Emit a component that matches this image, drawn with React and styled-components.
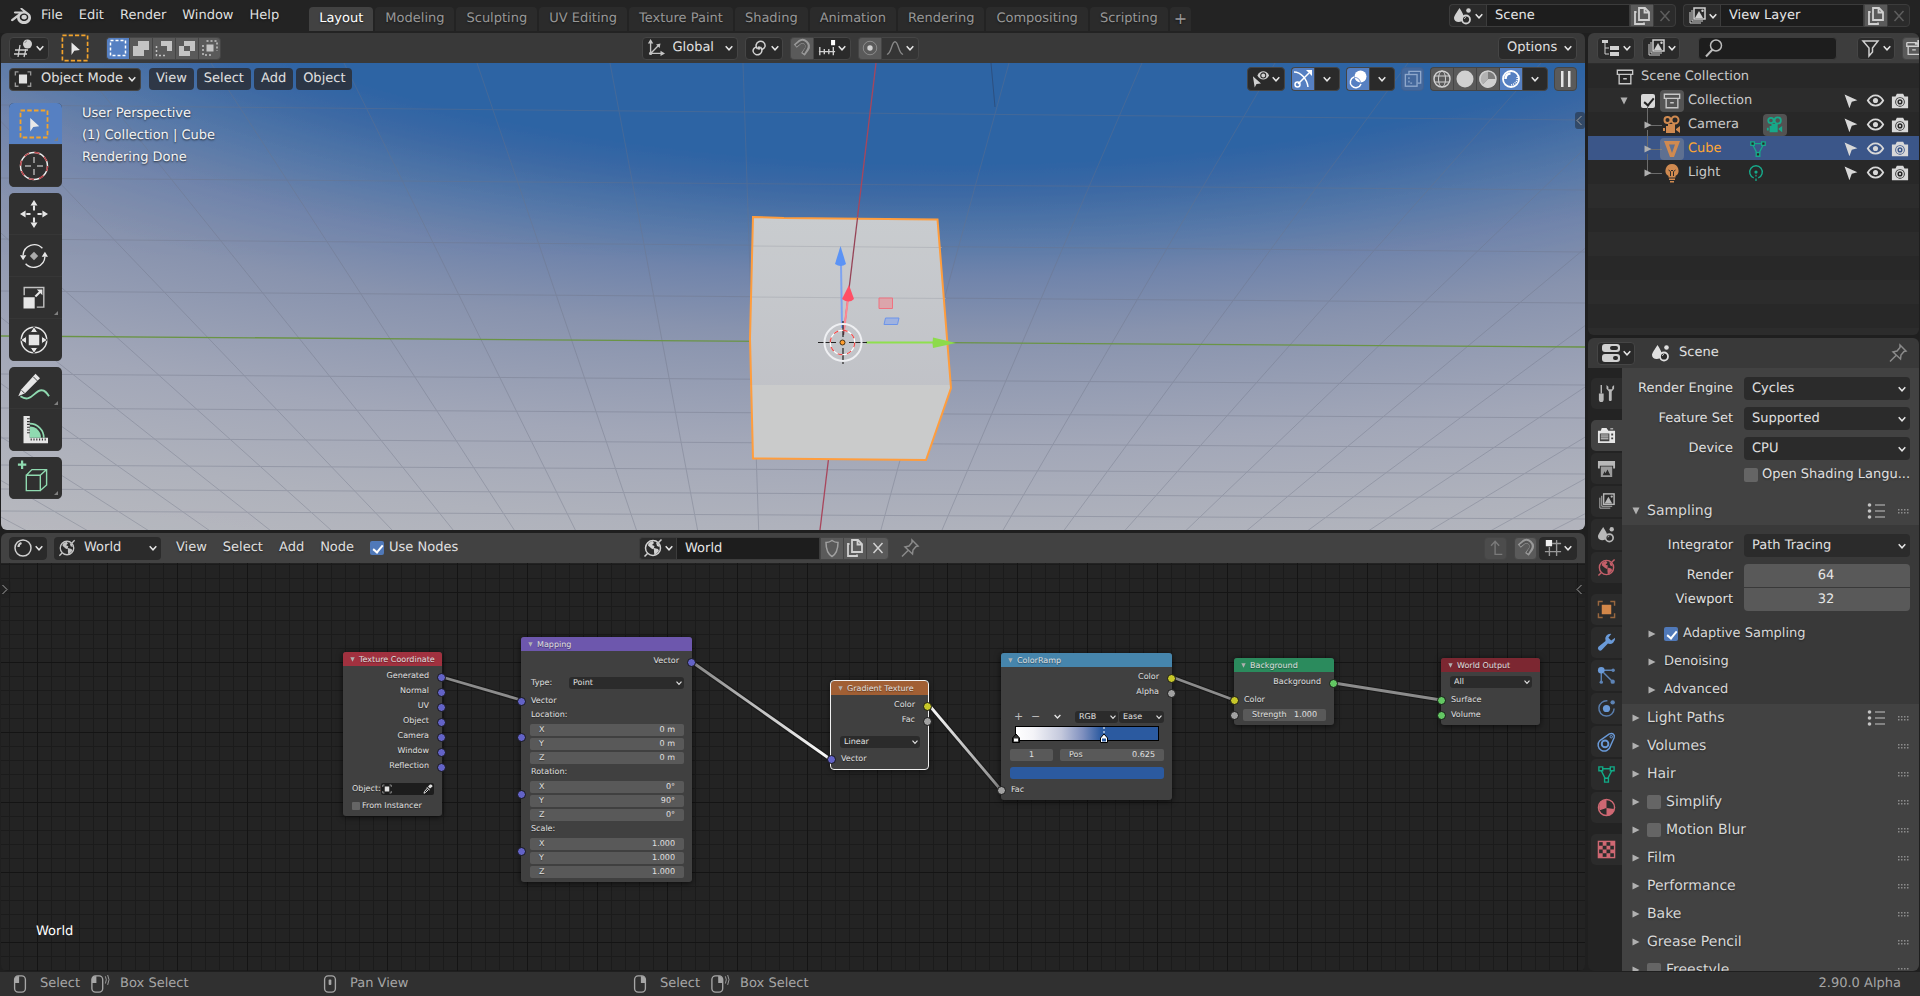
import React from 'react';
import styled, { createGlobalStyle, css } from 'styled-components';
import { SiBlender } from 'react-icons/si';

const GlobalStyle = createGlobalStyle`
    * {
        box-sizing: border-box;
    }
    body {
        margin: 0;
        background: #1f1f1f;
        color: #e0e0e0;
        font-family: "DejaVu Sans", "Noto Sans", sans-serif;
        font-size: 13px;
        line-height: 16px;
        text-rendering: geometricPrecision;
    }
    button, input, select {
        margin: 0;
        padding: 0;
        border: 0;
        background: none;
        color: inherit;
        font: inherit;
        text-rendering: inherit;
        min-width: 0;
    }
    svg {
        display: block;
        flex-shrink: 0;
    }
`;

/* ---------- icons, all on a 20 x 20 field ---------- */

const line = { fill: 'none', stroke: 'currentColor', strokeWidth: 1.5 };
const thin = { fill: 'none', stroke: 'currentColor', strokeWidth: 1 };

const photo = (
    <>
        <path d="M3 6v11h11" {...thin} />
        <path d="M5 4v11h11" {...thin} />
        <rect x="7" y="2" width="11" height="11" {...line} />
        <path d="M8 12l4-7 4 7z" fill="currentColor" />
        <circle cx="15.5" cy="4.8" r="1.2" fill="currentColor" />
    </>
);

const globe = (
    <>
        <circle cx="10" cy="10" r="7.500" {...line} />
        <path d="M5.500 5l4-2 1.500 2-2 2 2.500 1-1 3.500-2-1-3.500-3z M11 10l4 1 1 2-4.500 4.500-.5-3.500z M13 4.500l2.500 1 1 3.500-2.500-1z" fill="currentColor" />
        <path d="M1.500 18.500l3-3 M15.500 4.500l3-3" {...line} />
    </>
);

const cameraFilm = (
    <>
        <circle cx="5.500" cy="5" r="3" {...line} strokeWidth="2" />
        <circle cx="13" cy="5" r="3.500" {...line} strokeWidth="2" />
        <path d="M4 11h9v7H4z M14 14l4-3v7l-4-3z M1 13h2v3H1z M6 9h7v2H6z" fill="currentColor" />
    </>
);

const meshShape = (
    <>
        <path d="M4 4h12 M4 5l6 12 M16 5l-6 12" {...line} />
        <path d="M2 2h4v4H2z M14 2h4v4h-4z M8 14h4v4H8z" fill="#282828" stroke="currentColor" strokeWidth="1.500" />
    </>
);

const sceneShape = (
    <>
        <path d="M6.500 2C9 6 11 9 11 12l-2 3c-3 2-8 1-8-3 0-2 3-6 5.500-10z" fill="currentColor" />
        <circle cx="13" cy="13.500" r="4" fill="#2a2a2a" stroke="currentColor" strokeWidth="1.800" />
        <path d="M11.500 13c0-1 .5-1.500 1.500-1.500" {...thin} />
        <circle cx="15.500" cy="4.500" r="2.300" fill="currentColor" />
    </>
);

const dashBox = <rect x="2.500" y="2.500" width="15" height="15" {...line} strokeDasharray="3 2" />;

const mouseBody = <rect x="4" y="1" width="12" height="18" rx="4" {...line} />;

const SHAPES = {
    editor3d: (
        <>
            <path d="M1 12h13 M0 16h13 M6 7L4 19 M12 11l-2 8" {...thin} strokeWidth="1.300" />
            <circle cx="13.500" cy="6" r="4.500" fill="currentColor" />
            <path d="M11 5c0-1 1-2 2-2" stroke="#888" fill="none" />
        </>
    ),
    boxCursor: (
        <>
            <rect x="1" y="1" width="18" height="18" fill="none" stroke="#f2a32c" strokeWidth="1.200" strokeDasharray="3 1.500" />
            <path d="M7.500 6l6 5.500-4 .5-2 3z" fill="#e8e8e8" />
        </>
    ),
    selSet: dashBox,
    selExtend: <path d="M7 3h11v9h-5v6H2V8h5z" fill="currentColor" />,
    selSubtract: (
        <>
            <path d="M7 3h11v10h-5V8H7z" fill="currentColor" />
            <path d="M2.500 8v9.500h9" {...line} strokeDasharray="2 2" />
        </>
    ),
    selInvert: <path fillRule="evenodd" d="M7 3h11v10h-5v5H2V8h5z M7 8v5h6V8z" fill="currentColor" />,
    selIntersect: (
        <>
            <path d="M6.500 3H17v10 M3 7v10h10" {...line} strokeDasharray="2 2" />
            <path d="M6.500 6.500h7v7h-7z" fill="currentColor" />
        </>
    ),
    axes: (
        <>
            <path d="M4 3v13h13 M4 16l9-9" {...line} />
            <path d="M4 0L1 5h6z M20 16l-5-3v6z M15 5l-1 5-4-4z" fill="currentColor" />
            <circle cx="4" cy="16" r="1.800" fill="currentColor" />
        </>
    ),
    pivot: (
        <>
            <path d="M8.500 11A4.500 4.500 0 1 1 16 8.500a4.500 4.500 0 0 1-4 3" {...line} />
            <path d="M11.500 9A4.500 4.500 0 1 1 4 13a4.500 4.500 0 0 1 4-4" {...line} />
            <circle cx="10" cy="10" r="1.800" fill="currentColor" />
        </>
    ),
    magnet: (
        <>
            <path d="M2.500 8l5-4.500C12 0 18.500 6 15.500 11L11 17" {...line} strokeWidth="5" />
            <path d="M3.500 7.500l4.500-3.500C12 1.500 17 6 14.500 10.500L11.500 15.500" fill="none" stroke="#545454" strokeWidth="2.200" />
        </>
    ),
    increment: (
        <>
            <path d="M1 14h18 M2 9v9 M7 11v6 M12 11v6 M17 9v9" {...line} />
            <path d="M14.500 1h4.500v6h-4.500z" fill="#fff" />
        </>
    ),
    proportional: (
        <>
            <circle cx="10" cy="10" r="7.500" {...thin} opacity=".45" />
            <circle cx="10" cy="10" r="3" fill="currentColor" />
        </>
    ),
    falloff: <path d="M1 17C6 17 6 3 10 3s4 14 9 14" {...line} />,
    scene: sceneShape,
    copy: (
        <>
            <path d="M7 2h6l4 4v8H7z M12.500 2v4.500H17" {...line} strokeWidth="1.800" />
            <path d="M4.500 6H3v12h9v-1.500" {...line} strokeWidth="1.800" />
        </>
    ),
    close: <path d="M5.500 5l9 10 M14.500 5l-9 10" {...line} />,
    photo,
    tree: (
        <>
            <path d="M1 2h6v3H1z M9 8h9v4H9z M9 14h9v4H9z" fill="currentColor" />
            <path d="M4 5v11h4 M4 10h4" {...thin} />
        </>
    ),
    search: (
        <>
            <circle cx="12" cy="7.500" r="5.500" {...line} />
            <path d="M8.500 11.500L2 18.500" {...line} strokeWidth="2" />
        </>
    ),
    filter: <path d="M2 3h15l-5.500 7v4l-3.500 4v-8z" {...line} />,
    newCollection: (
        <>
            <path d="M2 4h11 M2 4v4h15 M3.500 8v9h13V8 M8 12h4" {...line} />
            <path d="M15 1v8 M11 5h8" {...line} strokeWidth="2.500" />
        </>
    ),
    collection: (
        <>
            <path d="M1.500 2.500h17v4.500h-17z M3.500 7v10.500h13V7" {...line} />
            <path d="M8 11h4v1.800H8z" fill="currentColor" />
        </>
    ),
    camera: cameraFilm,
    meshObject: <path fillRule="evenodd" d="M2 2h16l-6 16H8z M7 5.500l3 8.500 3-8.500z" fill="currentColor" />,
    mesh: meshShape,
    bulb: (
        <>
            <path d="M10 1a6.500 6.500 0 0 1 3.500 12v1.500h-7V13A6.500 6.500 0 0 1 10 1z M7 15.500h6V17H7z M8 18h4v1.500H8z" fill="currentColor" />
            <path d="M6.500 7l2 1.500L10 7l1.500 1.500 2-1.500 M8.500 9v4 M11.500 9v4" stroke="#2b2b2b" fill="none" />
        </>
    ),
    lightData: (
        <>
            <path d="M7.500 15.500A7 7 0 1 1 12.500 15.500" {...line} />
            <circle cx="10" cy="9" r="1.800" fill="currentColor" />
            <path d="M10 12v2 M10 16v3" {...line} />
        </>
    ),
    pointer: <path d="M2 2l16 7-7 2-3 8z" fill="currentColor" />,
    eye: (
        <>
            <path d="M1 10c4.500-8 13.500-8 18 0-4.500 8-13.500 8-18 0z" {...line} strokeWidth="2.200" />
            <circle cx="10" cy="10" r="3" fill="currentColor" />
        </>
    ),
    photoCam: (
        <>
            <path fillRule="evenodd" d="M1 5h4l1.500-3h7L15 5h4v13H1z M10 5.700a5.300 5.300 0 1 0 .01 0z" fill="currentColor" />
            <circle cx="10" cy="11" r="3.600" {...line} />
            <circle cx="10" cy="11" r="1.200" fill="currentColor" />
        </>
    ),
    properties: (
        <>
            <rect x="1" y="1" width="18" height="8" rx="3" fill="currentColor" />
            <rect x="1" y="11" width="18" height="8" rx="3" fill="currentColor" />
            <rect x="9" y="3" width="8" height="4" rx="2" fill="#2a2a2a" />
            <rect x="12" y="13" width="5" height="4" rx="2" fill="#2a2a2a" />
        </>
    ),
    tool: (
        <>
            <path d="M4.500 1v9" {...line} />
            <path d="M2 10h5v6q0 3-2.500 3T2 16z" fill="currentColor" />
            <path d="M10 1v4l2.500 3V17q1.500 2 3 0V8L18 5V1l-2 2v2.500h-4V3z" fill="currentColor" />
        </>
    ),
    render: (
        <>
            <path fillRule="evenodd" d="M1 5h3l1-3h5l2 3h7v13H1z M3 8v8h10V8z M15 8v2h2V8z M15 12v2h2v-2z" fill="currentColor" />
            <path d="M4 9.500h8 M4 11.500h8 M4 13.500h8 M14 3h3" {...thin} />
        </>
    ),
    printer: (
        <>
            <path d="M1 2h18v8h-2V7H3v3H1z" fill="currentColor" />
            <path fillRule="evenodd" d="M4 8h12v11H4z M6 17h8l-3-6-2 4-1-2z" fill="currentColor" opacity=".8" />
        </>
    ),
    world: globe,
    object: (
        <>
            <path d="M5 5h10v10H5z" fill="currentColor" />
            <path d="M1.500 6V1.500H6 M14 1.500h4.500V6 M18.500 14v4.500H14 M6 18.500H1.500V14" {...line} opacity=".65" />
        </>
    ),
    wrench: <path d="M19 5a5.500 5.500 0 0 1-7.500 6L5 18a2.500 2.500 0 0 1-3.500-3.500L9 8.500A5.500 5.500 0 0 1 15 1l-3 4 3 3z" fill="currentColor" />,
    particles: (
        <>
            <circle cx="4.500" cy="4.500" r="3.500" fill="currentColor" />
            <g opacity=".8">
                <path d="M7 4.500h9 M4.500 7v9 M7 7l9 9" {...line} />
                <circle cx="17" cy="4.500" r="1.800" fill="currentColor" />
                <circle cx="4.500" cy="17" r="1.800" fill="currentColor" />
                <circle cx="16.500" cy="16.500" r="2.300" fill="currentColor" />
            </g>
        </>
    ),
    physics: (
        <>
            <circle cx="10" cy="10" r="3.800" fill="currentColor" />
            <path d="M11 2a8 8 0 1 0 7 8" {...line} opacity=".75" />
            <circle cx="16.500" cy="3.500" r="2.300" fill="currentColor" opacity=".8" />
        </>
    ),
    constraint: (
        <>
            <path d="M3 9l10-7c4-1.500 6 1 5 4l-4 9a6.500 6.500 0 1 1-11-6z" {...line} />
            <circle cx="8.500" cy="12.500" r="3.500" {...line} strokeWidth="2" />
            <circle cx="15" cy="5" r="1.300" {...thin} />
        </>
    ),
    material: (
        <>
            <circle cx="10" cy="10" r="8.500" {...line} />
            <path d="M10 1.500v9L3 13A8 8 0 0 1 10 1.500z M10 10.500l8 1a8.500 8.500 0 0 1-8 7z" fill="currentColor" />
        </>
    ),
    texture: (
        <>
            <rect x="1.500" y="1.500" width="17" height="17" {...line} />
            <path
                d="M6 2h4v4H6z M14 2h4v4h-4z M2 6h4v4H2z M10 6h4v4h-4z M6 10h4v4H6z M14 10h4v4h-4z M2 14h4v4H2z M10 14h4v4h-4z"
                fill="currentColor"
            />
        </>
    ),
    list: (
        <>
            <circle cx="3.500" cy="4" r="1.800" fill="currentColor" />
            <circle cx="3.500" cy="10" r="1.800" fill="currentColor" />
            <circle cx="3.500" cy="16" r="1.800" fill="currentColor" />
            <path d="M9 4h10 M9 10h10 M9 16h10" {...thin} />
        </>
    ),
    pin: <path d="M12 2l6 6-2 .5-3 3.500-.5 4L5 9l4-1 3-3.500z M8 12.500L2 18.500" {...line} />,
    objectMode: (
        <>
            <path d="M5.500 5h9v10h-9z" fill="#e0e0e0" />
            <path d="M1.500 6V2H5 M15 2h3.500v4 M18.500 14v4H15 M5 18H1.500v-4" {...line} opacity=".7" />
        </>
    ),
    visibility: (
        <>
            <path d="M6 6c3-6 10-6 13 0-3 6-10 6-13 0z" fill="currentColor" />
            <circle cx="12.500" cy="6" r="2.800" fill="none" stroke="#2a2a2a" strokeWidth="1.200" />
            <path d="M1 7l9 8-5 .5-2 4z" fill="currentColor" />
        </>
    ),
    gizmo: (
        <>
            <path d="M1 3c7 0 13 7 14 15 M5 15L16 4" {...line} />
            <path d="M19 1v6l-6-6z" fill="currentColor" />
            <circle cx="4.500" cy="15.500" r="2.500" {...line} />
        </>
    ),
    overlay: (
        <>
            <circle cx="12.500" cy="7.500" r="6" fill="currentColor" />
            <path d="M6 8a5.500 5.500 0 1 0 7 7" {...line} />
            <path d="M6.500 8.500a5.500 5.500 0 0 1 6 6" stroke="#7d9ad2" fill="none" />
        </>
    ),
    xray: (
        <>
            <path d="M5.500 5V1.500h13v13H15" {...line} />
            <rect x="1.500" y="5" width="13" height="13" {...line} />
            <path d="M5.500 8v6.500H11" {...line} strokeDasharray="2 2" />
        </>
    ),
    wire: (
        <>
            <circle cx="10" cy="10" r="8" {...line} />
            <ellipse cx="10" cy="10" rx="3.500" ry="8" {...thin} />
            <path d="M2.500 7h15 M2.500 13h15" {...thin} />
        </>
    ),
    solid: <circle cx="10" cy="10" r="8.500" fill="currentColor" />,
    preview: (
        <>
            <circle cx="10" cy="10" r="8" {...line} />
            <path d="M10 2v8L4 16A8 8 0 0 1 10 2z" fill="currentColor" opacity=".75" />
            <path d="M10 2a8 8 0 0 1 8 8h-8z" fill="currentColor" opacity=".3" />
            <path d="M10 10h8a8 8 0 0 1-14 6z" fill="currentColor" />
        </>
    ),
    rendered: (
        <>
            <circle cx="10" cy="10" r="8" {...line} strokeWidth="1.800" />
            <path d="M4.500 10c0-3 2-5.500 5-5.500" {...line} strokeWidth="2.500" />
            <path d="M16 8c1 4-2 7-6 8" {...line} strokeDasharray="1 1" />
        </>
    ),
    pause: <path d="M5 2h2.500v16H5z M12 2h2.500v16H12z" fill="currentColor" />,
    shaderBall: (
        <>
            <circle cx="10" cy="10" r="8" {...line} />
            <path d="M5.500 9c0-2 1.500-3.500 3-4" {...line} strokeWidth="2.200" />
        </>
    ),
    shield: <path d="M10 2.500c2 1.500 4 2 6 2 0 6-1 11-6 14-5-3-6-8-6-14 2 0 4-.5 6-2z" {...line} />,
    up: <path d="M9 3v14h8 M4.500 7.500L9 2.500l4.500 5" {...line} />,
    nodeSnap: (
        <>
            <path d="M2 1h7v7H2z" fill="#eee" />
            <path d="M1 14h18 M9 5h10 M6 9v10 M14 1v18" {...line} />
        </>
    ),
    dropper: (
        <>
            <path d="M14 1q5-1 5 4l-5 4-4-4z M8 6l6 6-1 1-6-6z" fill="currentColor" />
            <path d="M9 8l-6 7-1 3.500L5 17l6-6" {...line} strokeWidth="2" />
        </>
    ),
    cursor3d: (
        <>
            <circle cx="10" cy="10" r="9" fill="none" stroke="#eee" strokeWidth="1" />
            <circle cx="10" cy="10" r="9" fill="none" stroke="#b8454a" strokeWidth="1" strokeDasharray="3.500 3.570" />
            <path d="M10 4v4 M10 12v4 M4 10h4 M12 10h4" {...thin} opacity=".7" />
        </>
    ),
    move: (
        <>
            <path d="M10 0l2.500 4h-5z M10 20l2.500-4h-5z M0 10l4-2.500v5z M20 10l-4-2.500v5z" fill="currentColor" />
            <path d="M10 4v3.500 M10 12.500V16 M4.500 10h3 M12.500 10h3" {...line} />
        </>
    ),
    rotate: (
        <>
            <path d="M16 4.500a8 8 0 0 0-13.800 5 M4 15.500a8 8 0 0 0 13.800-5" {...thin} />
            <path d="M0 9.500h4.500L2.200 13z M15.500 10.500H20L17.800 7z" fill="currentColor" />
            <path d="M10 7l3 3-3 3-3-3z" fill="#aaa" />
        </>
    ),
    scale: (
        <>
            <path d="M3 8V2.500h14v14h-5" {...thin} opacity=".8" />
            <path d="M2.500 9.500h8v8h-8z M16 4v4l-4-4z" fill="currentColor" />
            <path d="M11 9l4-4" {...line} />
        </>
    ),
    transform: (
        <>
            <circle cx="10" cy="10" r="8.500" {...thin} />
            <path d="M6.500 6.500h7v7h-7z" fill="currentColor" />
            <path d="M10 1l2.500 4h-5z M10 19l2.500-4h-5z M1 10l4-2.500v5z M19 10l-4-2.500v5z" fill="currentColor" stroke="#303030" strokeWidth=".6" />
        </>
    ),
    annotate: (
        <>
            <path d="M11 .5l3 3L4 13.500l-4.500 2 2-4.500z" fill="currentColor" />
            <path d="M9.500 2.500l2.800 2.800 M1.700 11.500l2 2" stroke="#303030" strokeWidth=".6" />
            <path d="M1 15.500c7 5 9-4 14-4 2.500 0 3.500 1.500 5 4" fill="none" stroke="#8fdab0" strokeWidth="1.200" />
        </>
    ),
    measure: (
        <>
            <path d="M2.500 0h4.500v15.500H20v4H2.500z" fill="currentColor" />
            <path d="M7 15.500V7.500a8 8 0 0 1 8 8z" fill="#8fdab0" />
            <path d="M7 5.500a10 10 0 0 1 10 10" fill="none" stroke="#8fdab0" strokeWidth="1.200" />
            <path d="M5 2h2 M5 4h2 M5 6h2 M5 8h2 M5 10h2 M5 12h2 M8 16v1.500 M10 16v1.500 M12 16v1.500 M14 16v1.500 M16 16v1.500 M18 16v1.500" stroke="#303030" strokeWidth=".8" />
        </>
    ),
    addCube: (
        <>
            <path d="M4.500 8h10v11h-10z M4.500 8l4-4H19v11l-4.500 4 M14.500 8L19 4" fill="none" stroke="#8fdab0" />
            <path d="M1.500-2.500v6 M-1.500.5h6" stroke="#8fdab0" strokeWidth="1.600" />
        </>
    ),
    mouseLeft: (
        <>
            {mouseBody}
            <path d="M4 9V5q0-4 5-4v8z" fill="currentColor" />
        </>
    ),
    mouseLeftDrag: (
        <>
            <g transform="translate(-3 0)">{mouseBody}</g>
            <path d="M1 9V5q0-4 5-4v8z" fill="currentColor" />
            <path d="M16 1.500q2 3.500 0 8 M18.500 0q3 5 0 11" {...thin} />
        </>
    ),
    mouseMiddle: (
        <>
            {mouseBody}
            <rect x="8.500" y="5" width="3" height="6" rx="1" fill="currentColor" />
        </>
    ),
    mouseRight: (
        <>
            {mouseBody}
            <path d="M16 9V5q0-4-5-4v8z" fill="currentColor" />
        </>
    ),
    mouseRightDrag: (
        <>
            <g transform="translate(-3 0)">{mouseBody}</g>
            <path d="M13 9V5q0-4-5-4v8z" fill="currentColor" />
            <path d="M16 1.500q2 3.500 0 8 M18.500 0q3 5 0 11" {...thin} />
        </>
    ),
};

const Icon = ({ name, size = 20 }) => (
    <svg width={size} height={size} viewBox="0 0 20 20" overflow="visible" aria-hidden="true">
        {SHAPES[name]}
    </svg>
);

const Chevron = ({ size = 8 }) => (
    <svg width={size} height={size} viewBox="0 0 8 8" aria-hidden="true">
        <path d="M.7 2.300L4 5.800l3.300-3.500" fill="none" stroke="#e6e6e6" strokeWidth="1.500" />
    </svg>
);

const Triangle = ({ open, size = 8 }) => (
    <svg width={size} height={size} viewBox="0 0 8 8" aria-hidden="true">
        <path d={open ? 'M.5 .5h7L4 7.500z' : 'M.5 .5v7l7-3.500z'} fill="#b0b0b0" />
    </svg>
);

/* ---------- shared controls ---------- */

const Button = styled.button`
    display: flex;
    align-items: center;
    justify-content: center;
    gap: 2px;
    height: ${({ $tall }) => ($tall ? 24 : 23)}px;
    min-width: 23px;
    padding: 0 ${({ $pad }) => $pad || 0}px;
    background: ${({ $bg }) => $bg || '#2a2a2a'};
    color: ${({ $color }) => $color || '#d0d0d0'};
    border: 1px solid ${({ $edge }) => $edge || '#454545'};
    border-radius: 4px;
`;

const Group = styled.div`
    display: flex;
    border-radius: 4px;

    & > * {
        border-radius: 0;
        border-right-width: 0;
    }
    & > :first-child {
        border-radius: 4px 0 0 4px;
    }
    & > :last-child {
        border-radius: 0 4px 4px 0;
        border-right-width: 1px;
    }
`;

const MenuItem = styled.button`
    padding: 3px 8px;
    color: #e0e0e0;
    text-shadow: 0 1px 2px rgba(0, 0, 0, 0.5);
`;

const NameInput = styled.input`
    width: 144px;
    height: 23px;
    padding: 0 8px;
    background: #1d1d1d;
    border: 1px solid #3c3c3c;
    color: #e6e6e6;
`;

const Check = styled.input.attrs({ type: 'checkbox' })`
    appearance: none;
    position: relative;
    flex-shrink: 0;
    width: ${({ $small }) => ($small ? 8 : 14)}px;
    height: ${({ $small }) => ($small ? 8 : 14)}px;
    background: #656565;
    border-radius: ${({ $small }) => ($small ? 1 : 2)}px;

    &:checked {
        background: ${({ $light }) => ($light ? '#d8d8d8' : '#5079b9')};
    }
    &:checked::after {
        content: '';
        position: absolute;
        left: 5px;
        top: 2px;
        width: 4px;
        height: 8px;
        border: solid ${({ $light }) => ($light ? '#222' : '#fff')};
        border-width: 0 2px 2px 0;
        transform: rotate(40deg);
    }
`;

const SelectBox = styled.span`
    display: grid;
    flex: ${({ $grow }) => ($grow ? 1 : 'none')};
    align-items: center;
    width: ${({ $width }) => ($width ? $width + 'px' : 'auto')};
    height: ${({ $node }) => ($node ? 12 : 23)}px;
    background: ${({ $edge }) => ($edge ? '#2a2a2a' : '#2b2b2b')};
    border: ${({ $edge }) => ($edge ? '1px solid #454545' : '0')};
    border-radius: ${({ $node }) => ($node ? 3 : 4)}px;

    & > * {
        grid-area: 1 / 1;
    }
    & > svg {
        justify-self: end;
        margin-right: ${({ $node }) => ($node ? 2 : 4)}px;
        pointer-events: none;
    }
    & > svg.lead {
        justify-self: start;
        margin-left: 4px;
    }
`;

const NativeSelect = styled.select`
    appearance: none;
    width: 100%;
    height: 100%;
    padding-left: ${({ $left }) => $left}px;
    color: #e0e0e0;
`;

const Select = ({ label, id, value, left = 8, icon, node, ...rest }) => (
    <SelectBox $node={node} {...rest}>
        <NativeSelect $left={left} id={id} aria-label={label} defaultValue={value}>
            <option>{value}</option>
        </NativeSelect>
        {icon && (
            <svg className="lead" width="18" height="18" viewBox="0 0 20 20" color="#c4c4c4">
                {SHAPES[icon]}
            </svg>
        )}
        <Chevron size={node ? 6 : 8} />
    </SelectBox>
);

/* ---------- frame ---------- */

const Page = styled.div`
    display: flex;
    flex-direction: column;
    height: 100vh;
    overflow: hidden;
    background: #1f1f1f;
`;

const TopBar = styled.header`
    display: flex;
    align-items: center;
    height: 33px;
    flex-shrink: 0;
    padding: 0 10px 2px 11px;
    background: #232323;
`;

const Logo = styled.button`
    margin-right: 2px;
    color: #cfcfcf;
`;

const Menu = styled.nav`
    display: flex;
`;

const Tabs = styled.div`
    display: flex;
    align-self: flex-end;
    gap: 2px;
    flex: 1;
    margin-left: 22px;
`;

const Tab = styled.button`
    height: 24px;
    padding: 0 ${({ $plus }) => ($plus ? 4 : 10)}px;
    border-radius: 4px 4px 0 0;
    background: ${({ $active }) => ($active ? '#424242' : '#2b2b2b')};
    color: ${({ $active }) => ($active ? '#fff' : '#989898')};
    font-size: ${({ $plus }) => ($plus ? 16 : 13)}px;
    text-shadow: 0 1px 2px rgba(0, 0, 0, 0.5);
`;

const DataBlock = styled(Group)`
    margin-left: 7px;
`;

const Main = styled.main`
    display: grid;
    grid-template-columns: minmax(0, 1fr) 331px;
    gap: 3px;
    flex: 1;
    min-height: 0;
    padding: 0 1px 1px;
`;

const Column = styled.div`
    display: flex;
    flex-direction: column;
    gap: 3px;
    min-height: 0;
`;

const Area = styled.section`
    display: flex;
    flex-direction: column;
    flex: ${({ $share }) => $share} 1 0;
    min-height: 0;
    border-radius: 6px;
    overflow: hidden;
`;

const AreaHeader = styled.div`
    display: grid;
    grid-template-columns: 1fr auto 1fr;
    align-items: center;
    flex-shrink: 0;
    height: 30px;
    padding: 0 8px;
    background: ${({ $light }) => ($light ? '#424242' : '#393939')};
`;

const HeaderPart = styled.div`
    display: flex;
    align-items: center;
    justify-content: ${({ $end }) => ($end ? 'flex-end' : 'flex-start')};
    gap: ${({ $gap }) => $gap ?? 7}px;
    margin-right: ${({ $shift }) => $shift || 0}px;
`;

const ActiveTool = styled.span`
    margin: 0 10px 0 5px;
`;

const UseNodes = styled.label`
    display: flex;
    align-items: center;
    gap: 5px;
    margin-left: 8px;
`;

const StatusBar = styled.footer`
    display: grid;
    grid-template-columns: 310px 310px 1fr auto;
    align-items: center;
    flex-shrink: 0;
    height: 24px;
    padding: 0 19px 0 11px;
    background: #303030;
    color: #a6a6a6;
`;

const Hints = styled.div`
    display: flex;
    align-items: center;
    gap: 11px;
`;

const RegionTab = styled.button`
    position: absolute;
    ${({ $side }) => $side}: 0;
    top: ${({ $top }) => $top}px;
    width: 10px;
    height: 17px;
    background: rgba(30, 30, 30, 0.45);
    border-radius: 3px;
    color: #a0a0a0;
`;

const Arrowhead = ({ left }) => (
    <svg width="8" height="17" viewBox="0 0 8 17" aria-hidden="true">
        <path d={left ? 'M6.500 4L2 8.500 6.500 13' : 'M1.500 4L6 8.500 1.500 13'} fill="none" stroke="currentColor" />
    </svg>
);

/* ---------- 3D viewport ---------- */

const Viewport = styled.div`
    position: relative;
    flex: 1;
    min-height: 0;
    padding: 4px 8px;
    background: radial-gradient(
        ellipse 70% 83% at 60% -43%,
        #2e64a4 78%,
        #3c69a4 85%,
        #5578a8 96%,
        #7084ab 107%,
        #8893ae 122%,
        #a2a7b8 150%,
        #afb2bc 172%,
        #b9babf 195%
    );
`;

const Stage = styled.svg`
    position: absolute;
    inset: 0;
    width: 100%;
    height: 100%;
`;

const OverlayBar = styled.div`
    position: relative;
    display: flex;
    align-items: center;
    justify-content: space-between;
`;

const OverlayMenu = styled.button`
    height: 22px;
    padding: 0 7px;
    background: rgba(42, 46, 54, 0.85);
    border-radius: 4px;
    color: #e0e0e0;
`;

const ToolArea = styled.div`
    position: relative;
    display: flex;
    gap: 20px;
    margin-top: 12px;
`;

const Shelf = styled.div`
    display: flex;
    flex-direction: column;
    gap: 6px;
`;

const ToolGroup = styled.div`
    border-radius: 5px;
    overflow: hidden;
    background: #303030;
`;

const Tool = styled.button`
    position: relative;
    display: flex;
    align-items: center;
    justify-content: center;
    width: 53px;
    height: 42px;
    padding-right: 4px;
    color: #e6e6e6;
    background: ${({ $active }) => ($active ? '#5680c2' : 'transparent')};
    border-bottom: 1px solid #363636;

    ${({ $more }) =>
        $more &&
        css`
            &::after {
                content: '';
                position: absolute;
                right: 4px;
                bottom: 3px;
                border: 2px solid transparent;
                border-right-color: #808080;
                border-bottom-color: #808080;
            }
        `}
`;

const ViewInfo = styled.div`
    color: #f4f4f4;
    line-height: 22px;
    text-shadow: 0 1px 2px rgba(0, 0, 0, 0.7);
`;

const tools = [
    [
        { icon: 'boxCursor', label: 'Select Box', active: true, more: true, size: 30 },
        { icon: 'cursor3d', label: 'Cursor', size: 30 },
    ],
    [
        { icon: 'move', label: 'Move', size: 28 },
        { icon: 'rotate', label: 'Rotate', size: 28 },
        { icon: 'scale', label: 'Scale', more: true, size: 28 },
        { icon: 'transform', label: 'Transform', size: 30 },
    ],
    [
        { icon: 'annotate', label: 'Annotate', more: true, size: 30 },
        { icon: 'measure', label: 'Measure', size: 28 },
    ],
    [{ icon: 'addCube', label: 'Add Cube', more: true, size: 28 }],
];

const rowsLeft = [105, 178, 239, 291, 374, 408, 438, 465, 489, 511];
const rowsRight = [120, 190, 252, 303, 385, 418, 448, 474, 498, 519];
const spokes = [];
for (let k = -14; k <= 14; k++) {
    if (k !== 0) spokes.push(k);
}

const CubeScene = () => (
    <Stage viewBox="1 63 1584 467" preserveAspectRatio="xMidYMid slice" aria-hidden="true">
        <defs>
            <linearGradient id="front" x1="0" y1="0" x2="0" y2="1">
                <stop offset="0" stopColor="#c9cccf" />
                <stop offset="1" stopColor="#bdbec4" />
            </linearGradient>
        </defs>
        <g stroke="#6d7284" strokeWidth="1" opacity=".36">
            {rowsLeft.map((y, i) => (
                <path key={y} d={`M0 ${y}L1585 ${rowsRight[i]}`} />
            ))}
            {spokes.map((k) => (
                <path key={k} d={`M${876 + 133 * k} 63L772 927`} />
            ))}
        </g>
        <path d="M991 63l4 44" stroke="#2c5080" />
        <path d="M0 336L1585 347" stroke="#6a9445" strokeWidth="1.300" />
        <path d="M876 63L820 530" stroke="#a8465c" strokeWidth="1.300" />
        <path d="M753 217l31 1 153.500 1.500L951 388l-25 72-173-1.500-3-120z" fill="url(#front)" />
        <path d="M750.500 385H951v3l-25 72-173-1.500z" fill="#cacbcb" />
        <path d="M752 246l190 1.500 M751 297l195 1.500" stroke="#a8abb2" opacity=".6" />
        <path d="M753 217l31 1 153.500 1.500L951 388l-25 72-173-1.500-3-120z" fill="none" stroke="#ff9d3d" strokeWidth="2" />
        <path d="M857.500 218L843.500 335" stroke="#964457" strokeWidth="1.300" />

        <path d="M842 328l-1-64" stroke="#7ea3f0" strokeWidth="2" />
        <path d="M840.500 246l5.500 18q-5 4-11 0z" fill="#5b93f5" />
        <path d="M844 330l4-31" stroke="#ff8793" strokeWidth="2" />
        <path d="M849 285l5 14q-5 5-12 0z" fill="#ff4f66" />
        <path d="M866 342.500h68" stroke="#8fe04e" strokeWidth="2" />
        <path d="M933 337.500l23 5.500-23 5q-1-5 0-10.500z" fill="#8ddb4b" />
        <path d="M879 298h13.500v10.500H879z" fill="#e39aa0" fillOpacity=".75" stroke="#ef7280" />
        <path d="M885.500 318h13.500l-1.500 6.500h-13.500z" fill="#9fb2e0" stroke="#6c94ea" />
        <path d="M818 342.500h18 M849 342.500h18 M843 321v16 M843 348v16" stroke="#222" strokeWidth="1.200" />
        <circle cx="843" cy="342.500" r="18.500" fill="none" stroke="#eeeff2" strokeWidth="2" />
        <circle cx="842.500" cy="342.500" r="12.200" fill="none" stroke="#fff" strokeWidth="1.200" />
        <circle cx="842.500" cy="342.500" r="12.200" fill="none" stroke="#f04848" strokeWidth="1.200" strokeDasharray="4.800 4.780" />
        <circle cx="842.500" cy="342.500" r="2.500" fill="#ff9d2e" stroke="#4b3414" />
    </Stage>
);

const blue = '#5680c2';
const grey = '#5a5a5a';

const ViewportArea = () => (
    <Area $share={497} aria-label="3D Viewport">
        <AreaHeader>
            <HeaderPart>
                <Button $pad={4} aria-label="Editor type">
                    <Icon name="editor3d" />
                    <Chevron />
                </Button>
                <ActiveTool>
                    <Icon name="boxCursor" size={28} />
                </ActiveTool>
                <Group>
                    {['selSet', 'selExtend', 'selSubtract', 'selInvert', 'selIntersect'].map((mode, i) => (
                        <Button key={mode} $bg={i === 0 ? blue : grey} $color={i === 0 ? '#fff' : '#c4c4c4'} aria-label={mode}>
                            <Icon name={mode} />
                        </Button>
                    ))}
                </Group>
            </HeaderPart>
            <HeaderPart $shift={26}>
                <Select label="Transform orientation" value="Global" icon="axes" left={30} $width={96} $edge />
                <Button $pad={3} aria-label="Pivot point">
                    <Icon name="pivot" />
                    <Chevron />
                </Button>
                <Group>
                    <Button $bg={grey} $color="#999" aria-label="Snap">
                        <Icon name="magnet" size={18} />
                    </Button>
                    <Button $pad={4} aria-label="Snap to">
                        <Icon name="increment" size={18} />
                        <Chevron />
                    </Button>
                </Group>
                <Group>
                    <Button $bg={grey} aria-label="Proportional editing">
                        <Icon name="proportional" size={18} />
                    </Button>
                    <Button $pad={4} $bg="#353535" $color="#888" aria-label="Falloff">
                        <Icon name="falloff" size={18} />
                        <Chevron />
                    </Button>
                </Group>
            </HeaderPart>
            <HeaderPart $end>
                <Select label="Options" value="Options" $width={79} $edge />
            </HeaderPart>
        </AreaHeader>
        <Viewport>
            <CubeScene />
            <OverlayBar>
                <HeaderPart $gap={3}>
                    <HeaderPart $shift={5}>
                        <Select label="Mode" value="Object Mode" icon="objectMode" left={31} $width={132} $edge />
                    </HeaderPart>
                    {['View', 'Select', 'Add', 'Object'].map((name) => (
                        <OverlayMenu key={name}>{name}</OverlayMenu>
                    ))}
                </HeaderPart>
                <HeaderPart $end $gap={6}>
                    <Button $tall $pad={4} aria-label="Object visibility">
                        <Icon name="visibility" size={18} />
                        <Chevron />
                    </Button>
                    {['gizmo', 'overlay'].map((name) => (
                        <Group key={name}>
                            <Button $tall $bg={blue} $color="#fff" aria-label={'Show ' + name}>
                                <Icon name={name} />
                            </Button>
                            <Button $tall $pad={8} aria-label={name + ' settings'}>
                                <Chevron />
                            </Button>
                        </Group>
                    ))}
                    <Button $tall $bg="#44689c" $edge="#3f6294" $color="#8fa8cc" aria-label="X-ray">
                        <Icon name="xray" size={18} />
                    </Button>
                    <Group>
                        <Button $tall $bg={grey} aria-label="Wireframe">
                            <Icon name="wire" />
                        </Button>
                        <Button $tall $bg={grey} aria-label="Solid">
                            <Icon name="solid" />
                        </Button>
                        <Button $tall $bg={grey} aria-label="Material preview">
                            <Icon name="preview" />
                        </Button>
                        <Button $tall $bg={blue} $color="#fff" aria-label="Rendered">
                            <Icon name="rendered" />
                        </Button>
                        <Button $tall $pad={8} aria-label="Shading settings">
                            <Chevron />
                        </Button>
                    </Group>
                    <Button $tall $bg={grey} $color="#e6e6e6" aria-label="Pause preview">
                        <Icon name="pause" />
                    </Button>
                </HeaderPart>
            </OverlayBar>
            <ToolArea>
                <Shelf>
                    {tools.map((group, i) => (
                        <ToolGroup key={i}>
                            {group.map((tool) => (
                                <Tool key={tool.icon} $active={tool.active} $more={tool.more} aria-label={tool.label}>
                                    <Icon name={tool.icon} size={tool.size} />
                                </Tool>
                            ))}
                        </ToolGroup>
                    ))}
                </Shelf>
                <ViewInfo>
                    <div>User Perspective</div>
                    <div>(1) Collection | Cube</div>
                    <div>Rendering Done</div>
                </ViewInfo>
            </ToolArea>
            <RegionTab $side="right" $top={49} aria-label="Open sidebar">
                <Arrowhead left />
            </RegionTab>
        </Viewport>
    </Area>
);

/* ---------- node editor ---------- */

const Canvas = styled.div`
    position: relative;
    flex: 1;
    min-height: 0;
    overflow: hidden;
    background-color: #232323;
    background-image: linear-gradient(90deg, #141414 1px, transparent 1px), linear-gradient(#141414 1px, transparent 1px),
        linear-gradient(90deg, #1b1b1b 1px, transparent 1px), linear-gradient(#1b1b1b 1px, transparent 1px);
    background-size: 70px 70px, 70px 70px, 14px 14px, 14px 14px;
    background-position: 36px 0, 0 29px, 8px 0, 0 1px;
    font-size: 8px;
    line-height: 12px;
`;

const Links = styled.svg`
    position: absolute;
    inset: 0;
    width: 100%;
    height: 100%;
`;

const NodeBox = styled.article`
    position: absolute;
    left: ${({ $x }) => $x}px;
    top: ${({ $y }) => $y}px;
    width: ${({ $w }) => $w}px;
    padding-bottom: 3px;
    background: #404040;
    border-radius: 3px;
    box-shadow: 0 1px 6px rgba(0, 0, 0, 0.7);
    outline: ${({ $selected }) => ($selected ? '1px solid #f0f0f0' : 'none')};
    color: #e0e0e0;
    text-shadow: 0 1px 1px rgba(0, 0, 0, 0.4);
`;

const NodeHeader = styled.h2`
    display: flex;
    align-items: center;
    gap: 4px;
    height: 14px;
    margin: 0 0 2px;
    padding: 1px 0 0 7px;
    font-size: 8px;
    font-weight: normal;
    line-height: 12px;
    background: ${({ $color }) => $color};
    border-radius: 3px 3px 0 0;
`;

const socket = css`
    content: '';
    position: absolute;
    width: 7px;
    height: 7px;
    border: 1px solid #161616;
    border-radius: 50%;
`;

const NodeRow = styled.div`
    position: relative;
    display: flex;
    align-items: center;
    gap: ${({ $gap }) => $gap || 0}px;
    height: 15px;
    margin-top: ${({ $top }) => $top || 0}px;
    padding: ${({ $in, $out }) => ($in || $out ? 1 : 0)}px ${({ $out }) => ($out ? 13 : 8)}px 0
        ${({ $indent }) => ($indent ? 10 : 9)}px;
    justify-content: ${({ $out }) => ($out ? 'flex-end' : 'flex-start')};

    ${({ $out }) =>
        $out &&
        css`
            &::after {
                ${socket}
                top: 5px;
                right: -4px;
                background: ${$out};
            }
        `}
    ${({ $in }) =>
        $in &&
        css`
            &::before {
                ${socket}
                top: 4px;
                left: -4px;
                background: ${$in};
            }
        `}
`;

const VectorGroup = styled.fieldset`
    position: relative;
    display: grid;
    gap: 2px;
    margin: 0;
    min-width: 0;
    border: 0;
    padding: 0 8px 1px 9px;

    &::before {
        ${socket}
        top: calc(50% - 4px);
        left: -4px;
        background: #6363c7;
    }
`;

const GroupLabel = styled.div`
    height: 14px;
    padding: 1px 0 0 1px;
`;

const Field = styled.label`
    display: flex;
    align-items: center;
    flex: ${({ $w }) => ($w ? 'none' : 1)};
    width: ${({ $w }) => ($w ? $w + 'px' : 'auto')};
    height: 12px;
    padding: 0 9px;
    background: #595959;
    border-radius: 2px;

    input {
        flex: 1;
        width: 100%;
        height: 12px;
        text-align: ${({ $center }) => ($center ? 'center' : 'right')};
    }
`;

const ObjectPicker = styled.button`
    display: flex;
    align-items: center;
    justify-content: space-between;
    flex: 1;
    height: 12px;
    padding: 0 1px;
    background: #1d1d1d;
    border-radius: 2px;
`;

const RampButton = styled.button`
    display: grid;
    place-items: center;
    width: ${({ $wide }) => ($wide ? 26 : 17)}px;
    font-size: 11px;
    line-height: 12px;
    color: #bdbdbd;
`;

const RampModes = styled.div`
    display: flex;
    gap: 1px;
    margin-left: auto;
`;

const Ramp = styled.div`
    position: relative;
    width: 144px;
    height: 15px;
    margin: 2px 0 6px 14px;
    border: 1px solid #000;
    background: linear-gradient(90deg, #fff 0, #f4f4f8 12%, #c3c8dc 32%, #7f90bf 47%, #2b5aa0 60%, #2b5aa0 100%);
`;

const Stop = styled.svg`
    position: absolute;
    left: ${({ $at }) => $at}%;
    top: ${({ $line }) => ($line ? 0 : 6)}px;
    margin-left: -5px;
`;

const Swatch = styled.button`
    flex: 1;
    height: 12px;
    border-radius: 3px;
    background: #2b5aa0;
`;

const Caption = styled.div`
    position: absolute;
    left: 35px;
    bottom: 31px;
    color: #fff;
    font-size: 13px;
    line-height: 16px;
`;

const VECTOR = '#6363c7';
const COLOR = '#c7c729';
const VALUE = '#a1a1a1';
const SHADER = '#63c763';

const Node = ({ title, color, x, y, w, selected, children }) => (
    <NodeBox $x={x} $y={y} $w={w} $selected={selected}>
        <NodeHeader $color={color}>
            <Triangle open size={5} />
            {title}
        </NodeHeader>
        {children}
    </NodeBox>
);

const mappingGroups = [
    { name: 'Location:', values: ['0 m', '0 m', '0 m'] },
    { name: 'Rotation:', values: ['0°', '90°', '0°'] },
    { name: 'Scale:', values: ['1.000', '1.000', '1.000'] },
];

const links = [
    { d: 'M441 114L520 137', stroke: '#8c8c8c' },
    { d: 'M691 99L829 196', stroke: 'url(#fadeIn)' },
    { d: 'M928 142L1000 227', stroke: 'url(#fadeOut)' },
    { d: 'M1171 114L1233 137', stroke: '#8c8c8c' },
    { d: 'M1333 120L1440 137', stroke: '#8c8c8c' },
];

const NodeEditor = () => (
    <Area $share={438} aria-label="Shader Editor">
        <AreaHeader $light>
            <HeaderPart $gap={0}>
                <HeaderPart $shift={7}>
                    <Button $pad={3} $edge="#2a2a2a" aria-label="Editor type">
                        <Icon name="shaderBall" />
                        <Chevron />
                    </Button>
                    <Select label="Shader type" value="World" icon="world" left={30} $width={107} />
                </HeaderPart>
                {['View', 'Select', 'Add', 'Node'].map((name) => (
                    <MenuItem key={name}>{name}</MenuItem>
                ))}
                <UseNodes>
                    <Check defaultChecked />
                    Use Nodes
                </UseNodes>
            </HeaderPart>
            <HeaderPart $shift={26} $gap={9}>
                <Group>
                    <Button $pad={3} $edge="#3c3c3c" aria-label="Browse world">
                        <Icon name="world" />
                        <Chevron />
                    </Button>
                    <NameInput defaultValue="World" aria-label="World name" />
                    <Button $bg={grey} $color="#a0a0a0" aria-label="Fake user">
                        <Icon name="shield" />
                    </Button>
                    <Button $bg={grey} aria-label="New world">
                        <Icon name="copy" />
                    </Button>
                    <Button $bg={grey} aria-label="Unlink world">
                        <Icon name="close" />
                    </Button>
                </Group>
                <Button $bg="transparent" $edge="transparent" $color="#8a8a8a" aria-label="Pin">
                    <Icon name="pin" />
                </Button>
            </HeaderPart>
            <HeaderPart $end $gap={2}>
                <HeaderPart $shift={5}>
                    <Button $bg="#4c4c4c" $color="#7a7a7a" aria-label="Parent node tree">
                        <Icon name="up" size={18} />
                    </Button>
                </HeaderPart>
                <Button $bg={grey} $color="#999" aria-label="Snap nodes">
                    <Icon name="magnet" size={18} />
                </Button>
                <Button $pad={4} $edge="#2a2a2a" $color="#999" aria-label="Snap node element">
                    <Icon name="nodeSnap" size={18} />
                    <Chevron />
                </Button>
            </HeaderPart>
        </AreaHeader>
        <Canvas>
            <Links aria-hidden="true">
                <defs>
                    <linearGradient id="fadeIn">
                        <stop offset="0" stopColor="#858585" />
                        <stop offset="1" stopColor="#fff" />
                    </linearGradient>
                    <linearGradient id="fadeOut">
                        <stop offset="0" stopColor="#fff" />
                        <stop offset="1" stopColor="#858585" />
                    </linearGradient>
                </defs>
                {links.map((link) => (
                    <g key={link.d} fill="none">
                        <path d={link.d} stroke="#161616" strokeWidth="5" opacity=".8" />
                        <path d={link.d} stroke={link.stroke} strokeWidth="2.800" />
                    </g>
                ))}
            </Links>

            <Node title="Texture Coordinate" color="#a1313f" x={342} y={89} w={99}>
                {['Generated', 'Normal', 'UV', 'Object', 'Camera', 'Window', 'Reflection'].map((name) => (
                    <NodeRow key={name} $out={VECTOR}>
                        {name}
                    </NodeRow>
                ))}
                <NodeRow $top={8}>
                    Object:
                    <ObjectPicker aria-label="Object">
                        <Icon name="objectMode" size={10} />
                        <Icon name="dropper" size={10} />
                    </ObjectPicker>
                </NodeRow>
                <NodeRow as="label" $top={2} $gap={2}>
                    <Check $small />
                    From Instancer
                </NodeRow>
            </Node>

            <Node title="Mapping" color="#6d57ad" x={520} y={74} w={171}>
                <NodeRow $out={VECTOR}>Vector</NodeRow>
                <NodeRow as="label" $top={7} $indent $gap={17}>
                    Type:
                    <Select value="Point" node left={4} $grow />
                </NodeRow>
                <NodeRow $in={VECTOR} $top={3} $indent>
                    Vector
                </NodeRow>
                {mappingGroups.map((group) => (
                    <VectorGroup key={group.name}>
                        <GroupLabel>{group.name}</GroupLabel>
                        {['X', 'Y', 'Z'].map((axis, i) => (
                            <Field key={axis}>
                                {axis}
                                <input defaultValue={group.values[i]} aria-label={`${group.name} ${axis}`} />
                            </Field>
                        ))}
                    </VectorGroup>
                ))}
            </Node>

            <Node title="Gradient Texture" color="#a15f34" x={830} y={118} w={97} selected>
                <NodeRow $out={COLOR}>Color</NodeRow>
                <NodeRow $out={VALUE}>Fac</NodeRow>
                <NodeRow $top={7}>
                    <Select label="Gradient type" value="Linear" node left={4} $grow />
                </NodeRow>
                <NodeRow $in={VECTOR} $top={2} $indent>
                    Vector
                </NodeRow>
            </Node>

            <Node title="ColorRamp" color="#4685ac" x={1000} y={90} w={171}>
                <NodeRow $out={COLOR}>Color</NodeRow>
                <NodeRow $out={VALUE}>Alpha</NodeRow>
                <NodeRow $top={10}>
                    <RampButton aria-label="Add stop">+</RampButton>
                    <RampButton aria-label="Delete stop">−</RampButton>
                    <RampButton $wide aria-label="Tools">
                        <Chevron size={7} />
                    </RampButton>
                    <RampModes>
                        <Select label="Color mode" value="RGB" node left={4} $width={43} />
                        <Select label="Interpolation" value="Ease" node left={4} $width={45} />
                    </RampModes>
                </NodeRow>
                <Ramp>
                    <Stop $at={0} width="10" height="10" viewBox="0 0 10 10" aria-hidden="true">
                        <path d="M1.500 9.500V5L5 1l3.500 4v4.500z" fill="#333" stroke="#000" />
                        <path d="M3 8.500v-3h4v3z" fill="#fff" />
                    </Stop>
                    <Stop $at={62} $line width="10" height="16" viewBox="0 0 10 16" aria-hidden="true">
                        <path d="M5 0v6" stroke="#fff" strokeDasharray="2 2" />
                        <path d="M1.500 15.500V11L5 7l3.500 4v4.500z" fill="#fff" stroke="#000" />
                        <path d="M3 14.500v-3h4v3z" fill="#2b5aa0" />
                    </Stop>
                </Ramp>
                <NodeRow $gap={7}>
                    <Field $w={43} $center>
                        <input defaultValue="1" aria-label="Active stop" />
                    </Field>
                    <Field>
                        Pos
                        <input defaultValue="0.625" />
                    </Field>
                </NodeRow>
                <NodeRow $top={3}>
                    <Swatch aria-label="Stop color" />
                </NodeRow>
                <NodeRow $in={VALUE} $top={2} $indent>
                    Fac
                </NodeRow>
            </Node>

            <Node title="Background" color="#2b8b5d" x={1233} y={95} w={100}>
                <NodeRow $out={SHADER}>Background</NodeRow>
                <NodeRow $in={COLOR} $top={3} $indent>
                    Color
                </NodeRow>
                <NodeRow $in={VALUE}>
                    <Field>
                        Strength
                        <input defaultValue="1.000" />
                    </Field>
                </NodeRow>
            </Node>

            <Node title="World Output" color="#7c2731" x={1440} y={95} w={99}>
                <NodeRow>
                    <Select label="Target" value="All" node left={4} $grow />
                </NodeRow>
                <NodeRow $in={SHADER} $top={3} $indent>
                    Surface
                </NodeRow>
                <NodeRow $in={SHADER} $indent>
                    Volume
                </NodeRow>
            </Node>

            <Caption>World</Caption>
            <RegionTab $side="left" $top={18} aria-label="Open toolbar">
                <Arrowhead />
            </RegionTab>
            <RegionTab $side="right" $top={18} aria-label="Open sidebar">
                <Arrowhead left />
            </RegionTab>
        </Canvas>
    </Area>
);

/* ---------- outliner ---------- */

const OutlinerHeader = styled.div`
    display: flex;
    align-items: center;
    flex-shrink: 0;
    gap: 7px;
    height: 30px;
    padding-left: 9px;
    background: #3d3d3d;
    overflow: hidden;
`;

const SearchBox = styled.label`
    display: flex;
    align-items: center;
    gap: 4px;
    flex: 1;
    height: 23px;
    margin: 0 13px 0 11px;
    padding: 0 5px;
    background: #1d1d1d;
    border: 1px solid #3c3c3c;
    border-radius: 4px;
    color: #bbb;

    input {
        flex: 1;
        width: 100%;
    }
`;

const Cut = styled.div`
    width: 17px;
    overflow: hidden;
`;

const Tree = styled.ul`
    flex: 1;
    margin: 0;
    padding: 1px 0 0;
    list-style: none;
    background: repeating-linear-gradient(#282828 0, #282828 24px, #2c2c2c 24px, #2c2c2c 48px) 0 1px;
`;

const TreeRow = styled.li`
    position: relative;
    display: flex;
    align-items: center;
    height: 24px;
    padding: 1px 10px 0 ${({ $pad }) => $pad}px;
    background: ${({ $selected }) => ($selected ? '#3b5689' : 'transparent')};
    color: ${({ $selected }) => ($selected ? '#ffa733' : '#c8c8c8')};

    ${({ $branch }) =>
        $branch &&
        css`
            &::before {
                content: '';
                position: absolute;
                left: 59px;
                top: -6px;
                height: 19px;
                width: 14px;
                border: solid #6c6c6c;
                border-width: 0 0 1px 1px;
            }
        `}
`;

const TreeIcon = styled.span`
    position: relative;
    display: grid;
    place-items: center;
    flex-shrink: 0;
    width: 24px;
    height: 22px;
    margin: 0 4px 0 ${({ $before }) => $before || 0}px;
    border-radius: 4px;
    color: ${({ $color }) => $color || '#c8c8c8'};
    background: ${({ $boxed }) => ($boxed ? 'rgba(160, 160, 160, .35)' : 'transparent')};
`;

const Twist = styled.button`
    position: relative;
    margin-right: ${({ $after }) => $after}px;
`;

const Toggles = styled.span`
    display: flex;
    align-items: center;
    gap: 6px;
    margin-left: auto;
    color: #d8d8d8;

    button {
        width: 18px;
    }
`;

const RowToggles = ({ of }) => (
    <Toggles>
        <button aria-label={`${of} selectable`}>
            <Icon name="pointer" size={16} />
        </button>
        <button aria-label={`${of} visible`}>
            <Icon name="eye" size={17} />
        </button>
        <button aria-label={`${of} in renders`}>
            <Icon name="photoCam" size={18} />
        </button>
    </Toggles>
);

const objects = [
    { name: 'Camera', icon: 'camera', data: 'camera', dataBoxed: true },
    { name: 'Cube', icon: 'meshObject', data: 'mesh', selected: true },
    { name: 'Light', icon: 'bulb', data: 'lightData' },
];

const Outliner = () => (
    <Area $share={302} aria-label="Outliner">
        <OutlinerHeader>
            <Button $pad={3} aria-label="Editor type">
                <Icon name="tree" />
                <Chevron />
            </Button>
            <Button $pad={3} aria-label="Display mode">
                <Icon name="photo" />
                <Chevron />
            </Button>
            <SearchBox>
                <Icon name="search" />
                <input type="search" aria-label="Search" />
            </SearchBox>
            <Button $pad={3} aria-label="Filter">
                <Icon name="filter" />
                <Chevron />
            </Button>
            <Cut>
                <Button $bg={grey} aria-label="New collection">
                    <Icon name="newCollection" size={18} />
                </Button>
            </Cut>
        </OutlinerHeader>
        <Tree>
            <TreeRow $pad={25}>
                <TreeIcon>
                    <Icon name="collection" size={18} />
                </TreeIcon>
                Scene Collection
            </TreeRow>
            <TreeRow $pad={32}>
                <Twist $after={13} aria-label="Collapse">
                    <Triangle open />
                </Twist>
                <Check defaultChecked $light aria-label="Collection enabled" />
                <TreeIcon $boxed $before={5}>
                    <Icon name="collection" size={18} />
                </TreeIcon>
                Collection
                <RowToggles of="Collection" />
            </TreeRow>
            {objects.map((object) => (
                <TreeRow key={object.name} $pad={56} $branch $selected={object.selected}>
                    <Twist $after={8} aria-label={`Expand ${object.name}`}>
                        <Triangle />
                    </Twist>
                    <TreeIcon $color="#d08a50" $boxed={object.selected}>
                        <Icon name={object.icon} />
                    </TreeIcon>
                    {object.name}
                    <TreeIcon $color="#17a98a" $boxed={object.dataBoxed} $before={24}>
                        <Icon name={object.data} size={18} />
                    </TreeIcon>
                    <RowToggles of={object.name} />
                </TreeRow>
            ))}
        </Tree>
    </Area>
);

/* ---------- properties ---------- */

const PropsHeader = styled.div`
    display: flex;
    align-items: center;
    gap: 8px;
    flex-shrink: 0;
    height: 30px;
    padding: 0 10px 0 9px;
    background: #393939;
    color: #e0e0e0;

    button:last-child {
        margin-left: auto;
    }
`;

const SceneTitle = styled.span`
    display: flex;
    align-items: center;
    gap: 8px;
    margin-left: 8px;
`;

const PropsBody = styled.div`
    display: flex;
    flex: 1;
    min-height: 0;
`;

const TabRail = styled.div`
    display: flex;
    flex-direction: column;
    gap: 11px;
    width: 34px;
    padding: 10px 0 0 3px;
    background: #232323;
`;

const TabSet = styled.div`
    display: grid;
    gap: 2px;
`;

const PropTab = styled.button`
    display: grid;
    place-items: center;
    height: 31px;
    border-radius: 5px 0 0 5px;
    background: ${({ $active }) => ($active ? '#424242' : '#2b2b2b')};
    color: ${({ $color }) => $color || '#b8b8b8'};
`;

const Panel = styled.div`
    flex: 1;
    min-width: 0;
    padding-top: 9px;
    background: #424242;
    overflow: hidden;
`;

const SubPanel = styled.div`
    padding-top: 9px;
    background: #393939;
`;

const PropRow = styled.div`
    display: grid;
    grid-template-columns: 111px minmax(0, 1fr);
    align-items: center;
    column-gap: 11px;
    height: ${({ $short }) => ($short ? 16 : 23)}px;
    margin-bottom: ${({ $tight }) => ($tight ? 1 : 7)}px;
    padding-right: 9px;
    text-align: right;
    white-space: nowrap;
    text-shadow: 0 1px 2px rgba(0, 0, 0, 0.4);
`;

const NumberInput = styled.input`
    width: 100%;
    height: 23px;
    padding-right: 2px;
    background: #595959;
    border-radius: ${({ $first }) => ($first ? '4px 4px 0 0' : '0 0 4px 4px')};
    text-align: center;
    color: #e6e6e6;
`;

const OpenShading = styled.label`
    grid-column: 2;
    display: flex;
    align-items: center;
    gap: 4px;
`;

const PanelHead = styled.div`
    display: flex;
    align-items: center;
    gap: ${({ $sub }) => ($sub ? 8 : 7)}px;
    height: 28px;
    margin-top: ${({ $above }) => $above || 0}px;
    padding: 0 10px 0 ${({ $sub }) => ($sub ? 26 : 10)}px;
    font-size: ${({ $sub }) => ($sub ? 13 : 14)}px;
    color: #d8d8d8;
    text-shadow: 0 1px 2px rgba(0, 0, 0, 0.4);
`;

const PanelTitle = styled.label`
    display: flex;
    align-items: center;
    flex: 1;
    gap: 5px;
`;

const Grip = () => (
    <svg width="11" height="5" viewBox="0 0 11 5" aria-hidden="true">
        {[0, 3, 6, 9].map((x) => (
            <path key={x} d={`M${x} 0h1.500v1.500h-1.500z M${x} 3h1.500v1.500h-1.500z`} fill="#8c8c8c" />
        ))}
    </svg>
);

const PresetButton = styled.button`
    margin-right: 5px;
    color: #c4c4c4;
`;

const tabSets = [
    [{ icon: 'tool', label: 'Tool' }],
    [
        { icon: 'render', label: 'Render', active: true, color: '#e6e6e6' },
        { icon: 'printer', label: 'Output' },
        { icon: 'photo', label: 'View Layer' },
        { icon: 'scene', label: 'Scene' },
        { icon: 'world', label: 'World', color: '#c45f69' },
    ],
    [
        { icon: 'object', label: 'Object', color: '#d38749' },
        { icon: 'wrench', label: 'Modifiers', color: '#6a9ad8' },
        { icon: 'particles', label: 'Particles', color: '#6a9ad8' },
        { icon: 'physics', label: 'Physics', color: '#6a9ad8' },
        { icon: 'constraint', label: 'Constraints', color: '#6a9ad8' },
        { icon: 'mesh', label: 'Object Data', color: '#12a986' },
        { icon: 'material', label: 'Material', color: '#cf6873' },
    ],
    [{ icon: 'texture', label: 'Texture', color: '#cf6873' }],
];

const panels = [
    { name: 'Light Paths', preset: true },
    { name: 'Volumes' },
    { name: 'Hair' },
    { name: 'Simplify', check: true },
    { name: 'Motion Blur', check: true },
    { name: 'Film' },
    { name: 'Performance' },
    { name: 'Bake' },
    { name: 'Grease Pencil' },
    { name: 'Freestyle', check: true },
];

const PropSelect = ({ name, value }) => {
    const id = name.toLowerCase().replace(' ', '-');
    return (
        <PropRow>
            <label htmlFor={id}>{name}</label>
            <Select id={id} value={value} />
        </PropRow>
    );
};

const Properties = () => (
    <Area $share={633} aria-label="Properties">
        <PropsHeader>
            <Button $pad={3} aria-label="Editor type">
                <Icon name="properties" />
                <Chevron />
            </Button>
            <SceneTitle>
                <Icon name="scene" />
                <span>Scene</span>
            </SceneTitle>
            <Button $bg="transparent" $edge="transparent" $color="#8a8a8a" aria-label="Pin">
                <Icon name="pin" />
            </Button>
        </PropsHeader>
        <PropsBody>
            <TabRail>
                {tabSets.map((set, i) => (
                    <TabSet key={i}>
                        {set.map((tab) => (
                            <PropTab key={tab.icon} $active={tab.active} $color={tab.color} aria-label={tab.label}>
                                <Icon name={tab.icon} size={19} />
                            </PropTab>
                        ))}
                    </TabSet>
                ))}
            </TabRail>
            <Panel>
                <PropSelect name="Render Engine" value="Cycles" />
                <PropSelect name="Feature Set" value="Supported" />
                <PropSelect name="Device" value="CPU" />
                <PropRow $short $tight>
                    <OpenShading>
                        <Check />
                        Open Shading Langu...
                    </OpenShading>
                </PropRow>
                <PanelHead $above={14}>
                    <Triangle open />
                    <PanelTitle as="div">Sampling</PanelTitle>
                    <PresetButton aria-label="Sampling presets">
                        <Icon name="list" />
                    </PresetButton>
                    <Grip />
                </PanelHead>
                <SubPanel>
                    <PropSelect name="Integrator" value="Path Tracing" />
                    <PropRow $tight>
                        <label htmlFor="render-samples">Render</label>
                        <NumberInput $first id="render-samples" defaultValue="64" />
                    </PropRow>
                    <PropRow>
                        <label htmlFor="viewport-samples">Viewport</label>
                        <NumberInput id="viewport-samples" defaultValue="32" />
                    </PropRow>
                    <PanelHead $sub $above={9}>
                        <Triangle />
                        <PanelTitle>
                            <Check defaultChecked />
                            Adaptive Sampling
                        </PanelTitle>
                    </PanelHead>
                    <PanelHead $sub>
                        <Triangle />
                        <PanelTitle as="div">Denoising</PanelTitle>
                    </PanelHead>
                    <PanelHead $sub>
                        <Triangle />
                        <PanelTitle as="div">Advanced</PanelTitle>
                    </PanelHead>
                </SubPanel>
                {panels.map((panel) => (
                    <PanelHead key={panel.name}>
                        <Triangle />
                        <PanelTitle as={panel.check ? 'label' : 'div'}>
                            {panel.check && <Check />}
                            {panel.name}
                        </PanelTitle>
                        {panel.preset && (
                            <PresetButton aria-label={`${panel.name} presets`}>
                                <Icon name="list" />
                            </PresetButton>
                        )}
                        <Grip />
                    </PanelHead>
                ))}
            </Panel>
        </PropsBody>
    </Area>
);

/* ---------- app ---------- */

const workspaces = [
    'Layout',
    'Modeling',
    'Sculpting',
    'UV Editing',
    'Texture Paint',
    'Shading',
    'Animation',
    'Rendering',
    'Compositing',
    'Scripting',
];

const App = () => (
    <>
        <GlobalStyle />
        <Page>
            <TopBar>
                <Logo aria-label="Blender">
                    <SiBlender size={20} />
                </Logo>
                <Menu>
                    {['File', 'Edit', 'Render', 'Window', 'Help'].map((name) => (
                        <MenuItem key={name}>{name}</MenuItem>
                    ))}
                </Menu>
                <Tabs>
                    {workspaces.map((name, i) => (
                        <Tab key={name} $active={i === 0}>
                            {name}
                        </Tab>
                    ))}
                    <Tab $plus aria-label="Add workspace">
                        +
                    </Tab>
                </Tabs>
                {[
                    { icon: 'scene', name: 'Scene' },
                    { icon: 'photo', name: 'View Layer' },
                ].map((block) => (
                    <DataBlock key={block.name}>
                        <Button $pad={3} $edge="#3c3c3c" aria-label={`Browse ${block.name}`}>
                            <Icon name={block.icon} />
                            <Chevron />
                        </Button>
                        <NameInput defaultValue={block.name} aria-label={`${block.name} name`} />
                        <Button $bg={grey} aria-label={`New ${block.name}`}>
                            <Icon name="copy" />
                        </Button>
                        <Button $bg="#2b2b2b" $edge="#3c3c3c" $color="#5e5e5e" aria-label={`Remove ${block.name}`}>
                            <Icon name="close" />
                        </Button>
                    </DataBlock>
                ))}
            </TopBar>
            <Main>
                <Column>
                    <ViewportArea />
                    <NodeEditor />
                </Column>
                <Column>
                    <Outliner />
                    <Properties />
                </Column>
            </Main>
            <StatusBar>
                <Hints>
                    <Icon name="mouseLeft" size={18} />
                    Select
                    <Icon name="mouseLeftDrag" size={18} />
                    Box Select
                </Hints>
                <Hints>
                    <Icon name="mouseMiddle" size={18} />
                    Pan View
                </Hints>
                <Hints>
                    <Icon name="mouseRight" size={18} />
                    Select
                    <Icon name="mouseRightDrag" size={18} />
                    Box Select
                </Hints>
                <span>2.90.0 Alpha</span>
            </StatusBar>
        </Page>
    </>
);

export default App;
